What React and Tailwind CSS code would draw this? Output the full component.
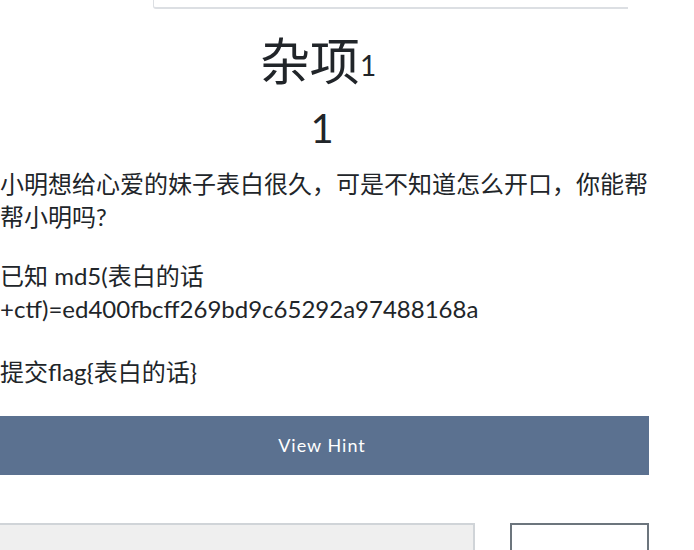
import React from 'react';

const body = { fontFamily: "Lato, 'Noto Sans CJK SC', sans-serif" };
const cjk = { fontFamily: "'Noto Sans CJK SC', sans-serif" };

function Para({ children, className = '' }) {
  return (
    <p className={`pl-[5px] text-[24px] leading-[33px] text-[#212529] ${className}`}>
      {children}
    </p>
  );
}

export default function App() {
  return (
    <div className="w-[694px] h-[550px] overflow-hidden bg-white" style={body}>
      <div className="ml-[-5px] w-[654px]">
        {/* bottom edge of the box above */}
        <div className="ml-[158px] w-[475px] h-[9px] border-l border-b-2 border-[#dcdfe3] rounded-bl-[3px]" />

        <h1 className="mt-[21px] pr-[8px] text-center leading-[56px] text-[#212529] font-normal">
          <span className="text-[50px]" style={cjk}>杂项</span>
          <span className="text-[28px] align-[4px]">1</span>
        </h1>
        <div className="mt-[2px] text-center text-[40px] leading-[48px] text-[#212529]">1</div>

        <div className="mt-[15px]">
          <Para className="mb-[26px]">
            小明想给心爱的妹子表白很久，可是不知道怎么开口，你能帮帮小明吗?
          </Para>
          <Para className="mb-[30px]">
            已知 md5(表白的话+ctf)=ed400fbcff269bd9c65292a97488168a
          </Para>
          <Para>提交flag{'{'}表白的话{'}'}</Para>
        </div>

        <button className="mt-[28px] w-full h-[59px] bg-[#5b7190] text-white text-[18px] tracking-[1px]">
          View Hint
        </button>

        <div className="mt-[48px] flex items-start justify-between">
          <div className="w-[480px] h-[60px] bg-[#efefef] border-2 border-[#d0d4d8]" />
          <div className="w-[139px] h-[60px] bg-white border-2 border-[#6c757d]" />
        </div>
      </div>
    </div>
  );
}
